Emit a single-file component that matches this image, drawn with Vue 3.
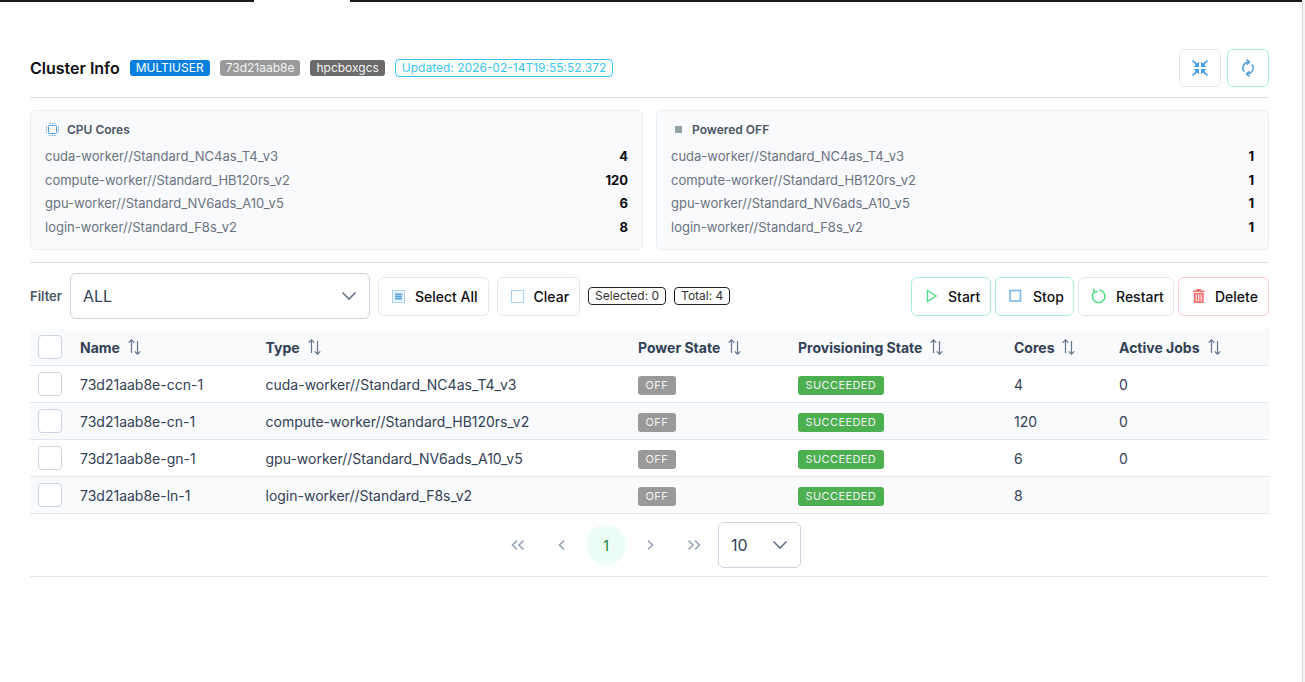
<script setup>
const sizes = [
  { type: 'cuda-worker//Standard_NC4as_T4_v3', cores: 4, off: 1 },
  { type: 'compute-worker//Standard_HB120rs_v2', cores: 120, off: 1 },
  { type: 'gpu-worker//Standard_NV6ads_A10_v5', cores: 6, off: 1 },
  { type: 'login-worker//Standard_F8s_v2', cores: 8, off: 1 }
]
const rows = [
  { name: '73d21aab8e-ccn-1', type: sizes[0].type, cores: 4, jobs: '0' },
  { name: '73d21aab8e-cn-1', type: sizes[1].type, cores: 120, jobs: '0' },
  { name: '73d21aab8e-gn-1', type: sizes[2].type, cores: 6, jobs: '0' },
  { name: '73d21aab8e-ln-1', type: sizes[3].type, cores: 8, jobs: '' }
]
const columns = ['Name', 'Type', 'Power State', 'Provisioning State', 'Cores', 'Active Jobs']
</script>

<template>
  <div class="page">
    <div class="topbar">
      <div class="black first"></div>
      <div class="gap-white"></div>
      <div class="black rest"></div>
    </div>
    <main class="content">
      <header class="head">
        <div class="head-left">
          <h1>Cluster Info</h1>
          <span class="tag blue">MULTIUSER</span>
          <span class="tag grey">73d21aab8e</span>
          <span class="tag dark">hpcboxgcs</span>
          <span class="tag outline-cyan">Updated: 2026-02-14T19:55:52.372</span>
        </div>
        <div class="head-right">
          <button class="icon-btn slate">
            <svg width="16" height="16" viewBox="0 0 16 16" fill="none" stroke="#4a9fe3" stroke-width="1.7">
              <path d="M.6 .6l4.500 4.500M15.400 .6l-4.500 4.500M.6 15.400l4.500-4.500M15.400 15.400l-4.500-4.500" />
              <path d="M1.500 7h5.500V1.500z M14.500 7H9V1.500z M1.500 9H7v5.500z M14.500 9H9v5.500z" fill="#4a9fe3" stroke="none" />
            </svg>
          </button>
          <button class="icon-btn mint">
            <svg width="16" height="18" viewBox="0 0 16 18" fill="none" stroke="#4a9fe3" stroke-width="1.4">
              <path d="M4 12.500A5.800 5.800 0 0 1 8.500 3.200" />
              <path d="M6.500 .6L9.500 3.100 6.500 5.600" />
              <path d="M12 5.500A5.800 5.800 0 0 1 7.500 14.800" />
              <path d="M9.500 12.400L6.500 14.900 9.500 17.400" />
            </svg>
          </button>
        </div>
      </header>

      <section class="cards">
        <article class="card">
          <div class="card-title">
            <svg class="card-ico" width="13" height="13" viewBox="0 0 13 13" fill="none">
              <rect x="2.500" y="2.500" width="8" height="8" rx="1" stroke="#4a9fe3" />
              <path d="M3.500 .5h1.200M5.900 .5h1.200M8.300 .5h1.200M3.500 12.500h1.200M5.900 12.500h1.200M8.300 12.500h1.200M.5 3.500v1.200M.5 5.900v1.200M.5 8.300v1.200M12.500 3.500v1.200M12.500 5.900v1.200M12.500 8.300v1.200" stroke="#4a9fe3" />
            </svg>
            <span>CPU Cores</span>
          </div>
          <div v-for="s in sizes" :key="s.type" class="stat">
            <span>{{ s.type }}</span><b>{{ s.cores }}</b>
          </div>
        </article>
        <article class="card">
          <div class="card-title">
            <span class="sq-wrap"><i class="sq"></i></span>
            <span>Powered OFF</span>
          </div>
          <div v-for="s in sizes" :key="s.type" class="stat">
            <span>{{ s.type }}</span><b>{{ s.off }}</b>
          </div>
        </article>
      </section>

      <section class="toolbar">
        <div class="tools-left">
          <label class="filter-label">Filter</label>
          <div class="select filter-select">
            <span>ALL</span>
            <svg width="16" height="10" viewBox="0 0 16 10" fill="none" stroke="#64748b" stroke-width="1.6"><path d="M1.500 1.500L8 8l6.500-6.500" /></svg>
          </div>
          <button class="btn plain">
            <svg width="13" height="13" viewBox="0 0 13 13" fill="none">
              <rect x=".5" y=".5" width="12" height="12" stroke="#4a9fe3" stroke-dasharray="1 1" />
              <rect x="2.500" y="2.500" width="8" height="8" fill="#a9cdee" />
              <path d="M3.500 4.500h6M3.500 6.500h6M3.500 8.500h6" stroke="#4a9fe3" />
            </svg>
            <span>Select All</span>
          </button>
          <button class="btn plain">
            <svg width="13" height="13" viewBox="0 0 13 13" fill="none">
              <rect x=".5" y=".5" width="12" height="12" stroke="#4a9fe3" stroke-dasharray="1 1" />
            </svg>
            <span>Clear</span>
          </button>
          <span class="count">Selected: 0</span>
          <span class="count">Total: 4</span>
        </div>
        <div class="tools-right">
          <button class="btn mint-b start">
            <svg width="14" height="14" viewBox="0 0 14 14" fill="none" stroke="#4ade80" stroke-width="1.400"><path d="M2.500 1.500L11 7l-8.500 5.500z" /></svg>
            <span>Start</span>
          </button>
          <button class="btn mint-b stop">
            <svg width="14" height="14" viewBox="0 0 14 14" fill="none"><rect x="1" y="1.500" width="10.500" height="10.500" stroke="#7ab8ec" stroke-width="1.600" /></svg>
            <span>Stop</span>
          </button>
          <button class="btn restart">
            <svg width="16" height="16" viewBox="0 0 16 16" fill="none" stroke="#4ade80" stroke-width="1.500">
              <path d="M8.600 2A6.300 6.300 0 1 1 3.200 3.800" />
              <path d="M2.500 .8l1 3.400 3.400-.6" />
            </svg>
            <span>Restart</span>
          </button>
          <button class="btn red-b del">
            <svg width="14" height="14" viewBox="0 0 14 14" fill="#f87171">
              <path d="M3.800 0h3.900l.6 1.500H11.500V3H0V1.500h3.200zM.8 3.800h9.900V14H.8zM2.800 5.300V12.500h1V5.300zm2.450 0V12.500h1V5.300zm2.450 0V12.500h1V5.300z" fill-rule="evenodd" />
            </svg>
            <span>Delete</span>
          </button>
        </div>
      </section>

      <table class="grid">
        <colgroup>
          <col class="c0" /><col class="c1" /><col class="c2" /><col class="c3" /><col class="c4" /><col class="c5" /><col class="c6" />
        </colgroup>
        <thead>
          <tr>
            <th><span class="check"></span></th>
            <th v-for="c in columns" :key="c">
              <span class="th-in">{{ c }}
                <svg class="sort" width="15" height="16" viewBox="0 0 15 16" fill="none" stroke="#64748b" stroke-width="1.200">
                  <path d="M4.500 14V.8M1.700 3.600L4.500 .8l2.800 2.800" />
                  <path d="M10.500 2v13.200M7.700 12.400l2.800 2.800 2.800-2.800" />
                </svg>
              </span>
            </th>
          </tr>
        </thead>
        <tbody>
          <tr v-for="r in rows" :key="r.name">
            <td><span class="check"></span></td>
            <td>{{ r.name }}</td>
            <td>{{ r.type }}</td>
            <td class="pill-cell"><span class="pill off">OFF</span></td>
            <td class="pill-cell"><span class="pill ok">SUCCEEDED</span></td>
            <td>{{ r.cores }}</td>
            <td>{{ r.jobs }}</td>
          </tr>
        </tbody>
      </table>

      <nav class="pager">
        <button class="pg">
          <svg width="16" height="12" viewBox="0 0 16 12" fill="none" stroke="#94a3b8" stroke-width="1.600"><path d="M7 1.500L2.500 6 7 10.500M13.500 1.500L9 6l4.500 4.500" /></svg>
        </button>
        <button class="pg">
          <svg width="10" height="12" viewBox="0 0 10 12" fill="none" stroke="#94a3b8" stroke-width="1.600"><path d="M7 1.500L2.500 6 7 10.500" /></svg>
        </button>
        <button class="pg current">1</button>
        <button class="pg">
          <svg width="10" height="12" viewBox="0 0 10 12" fill="none" stroke="#94a3b8" stroke-width="1.600"><path d="M3 1.500L7.500 6 3 10.500" /></svg>
        </button>
        <button class="pg">
          <svg width="16" height="12" viewBox="0 0 16 12" fill="none" stroke="#94a3b8" stroke-width="1.600"><path d="M2.500 1.500L7 6l-4.500 4.500M9 1.500L13.500 6 9 10.500" /></svg>
        </button>
        <div class="select page-select">
          <span>10</span>
          <svg width="16" height="10" viewBox="0 0 16 10" fill="none" stroke="#64748b" stroke-width="1.600"><path d="M1.500 1.500L8 8l6.500-6.500" /></svg>
        </div>
      </nav>
    </main>
    <div class="scroll-edge"></div>
  </div>
</template>

<style>
html, body { margin: 0; background: #fff; overflow: hidden; }
</style>

<style scoped>
.page { width: 1305px; height: 682px; position: relative; font-family: Inter, "Liberation Sans", sans-serif; color: #334155; overflow: hidden; background: #fff; }
.topbar { display: flex; height: 2px; width: 1302px; }
.black { background: #1a1a1a; }
.first { width: 254px; }
.gap-white { width: 96px; }
.rest { flex: 1; }
.scroll-edge { position: absolute; top: 0; right: 0; width: 3px; height: 682px; background: #f4f4f4; border-left: 1px solid #dcdcdc; box-sizing: border-box; }

.content { padding: 47px 36px 0 30px; }
.head { display: flex; justify-content: space-between; align-items: center; height: 38px; padding-bottom: 10px; border-bottom: 1px solid #e0e0e0; margin-bottom: 12px; }
.head-left { display: flex; align-items: center; }
h1 { margin: 0 10px 0 0; font-size: 16px; font-weight: 600; color: #0f0f14; line-height: 20px; }
.tag { font-size: 12px; line-height: 16px; height: 16px; padding: 0 6px; border-radius: 3px; margin-right: 10px; color: #f5f5f5; display: inline-flex; align-items: center; font-weight: 400; }
.blue { background: #0b7fe0; color: #fff; }
.grey { background: #9a9a9a; }
.dark { background: #6b6b6b; }
.outline-cyan { background: #fff; color: #38c6f0; border: 1px solid #38c6f0; padding: 0 6px; border-radius: 4px; }
.head-right { display: flex; gap: 6px; }
.icon-btn { width: 42px; height: 38px; border-radius: 6px; background: #fff; display: flex; align-items: center; justify-content: center; padding: 0; }
.slate { border: 1px solid #e2e8f0; }
.mint { border: 1px solid #a7f3d0; }

.cards { display: grid; grid-template-columns: 1fr 1fr; gap: 13px; padding-bottom: 12px; border-bottom: 1px solid #e0e0e0; }
.card { background: #f8fafc; border: 1px solid #e9edf2; border-radius: 6px; height: 140px; box-sizing: border-box; padding: 11px 14px 0; }
.card-title { display: flex; align-items: center; gap: 8px; font-size: 12px; font-weight: 600; color: #4b5563; height: 14px; margin-bottom: 8px; margin-left: 1px; }
.card-ico { flex: none; }
.sq-wrap { width: 13px; margin-right: -1px; display: flex; justify-content: center; }
.sq { width: 7px; height: 7px; background: #94a3a3; display: block; }
.stat { display: flex; justify-content: space-between; align-items: center; font-size: 13px; height: 23px; padding-top: .5px; color: #6b7280; }
.stat b { color: #0a0a0a; font-weight: 700; font-size: 13px; }

.toolbar { display: flex; justify-content: space-between; align-items: center; height: 46px; margin-top: 10px; margin-bottom: 10px; }
.tools-left, .tools-right { display: flex; align-items: center; }
.tools-right { gap: 4px; }
.filter-label { font-size: 13px; font-weight: 600; color: #4b5563; margin-right: 8px; }
.select { box-sizing: border-box; background: #fff; border: 1px solid #cbd5e1; border-radius: 6px; display: flex; align-items: center; justify-content: space-between; font-size: 16px; color: #334155; }
.filter-select { width: 300px; height: 46px; padding: 0 12px; margin-right: 8px; }
.btn { height: 39px; box-sizing: border-box; background: #fff; border: 1px solid #e2e8f0; border-radius: 6px; display: inline-flex; align-items: center; font-family: inherit; font-size: 14px; font-weight: 500; color: #0f0f14; padding: 0 0 0 13px; gap: 9px; margin-right: 8px; }
.plain { padding-right: 10px; gap: 10px; }
.tools-right .btn { margin-right: 0; }
.start { width: 80px; }
.stop { width: 79px; gap: 10px; }
.restart { width: 96px; padding-left: 12px; }
.del { width: 91px; padding-left: 14px; gap: 8px; }
.mint-b { border-color: #a7f3d0; }
.red-b { border-color: #fecaca; }
.count { border: 1px solid #222; border-radius: 4px; font-size: 12px; line-height: 16px; padding: 0 6px; color: #333; margin-right: 8px; }

.grid { width: 100%; border-collapse: separate; border-spacing: 0; table-layout: fixed; font-size: 14px; color: #334155; }
.c0 { width: 50px; } .c1 { width: 185.500px; } .c2 { width: 372.500px; } .c3 { width: 160px; } .c4 { width: 216px; } .c5 { width: 105px; }
.grid th { height: 37px; padding: 0; background: #f8fafc; text-align: left; font-weight: 700; color: #334155; border-bottom: 1px solid #e2e8f0; box-sizing: border-box; }
.grid td { height: 37px; padding: 1px 0 0; border-bottom: 1px solid #e2e8f0; box-sizing: border-box; }
.grid td.pill-cell { padding-top: 3px; }
.grid tbody tr:nth-child(even) td { background: #f8fafc; }
.grid th:first-child, .grid td:first-child { padding: 0 0 0 8px; }
.check { display: block; width: 24px; height: 24px; box-sizing: border-box; background: #fff; border: 1px solid #cbd5e1; border-radius: 4px; }
.th-in { display: inline-flex; align-items: center; gap: 7px; }
.sort { flex: none; }
.pill { display: inline-block; height: 19px; line-height: 19px; padding: 0 7.500px; border-radius: 3px; font-size: 11px; letter-spacing: .4px; color: #f4f4f4; vertical-align: middle; font-weight: 400; }
.off { background: #9a9a9a; }
.ok { background: #4caf50; }

.pager { display: flex; align-items: center; justify-content: center; height: 63px; box-sizing: border-box; border-bottom: 1px solid #e2e8f0; gap: 4px; }
.pg { width: 40px; height: 40px; border: 0; background: transparent; border-radius: 50%; padding: 0; display: flex; align-items: center; justify-content: center; font-family: inherit; font-size: 14px; color: #15803d; }
.current { background: #ecfdf5; }
.page-select { width: 83px; height: 46px; padding: 0 12px; }
</style>
